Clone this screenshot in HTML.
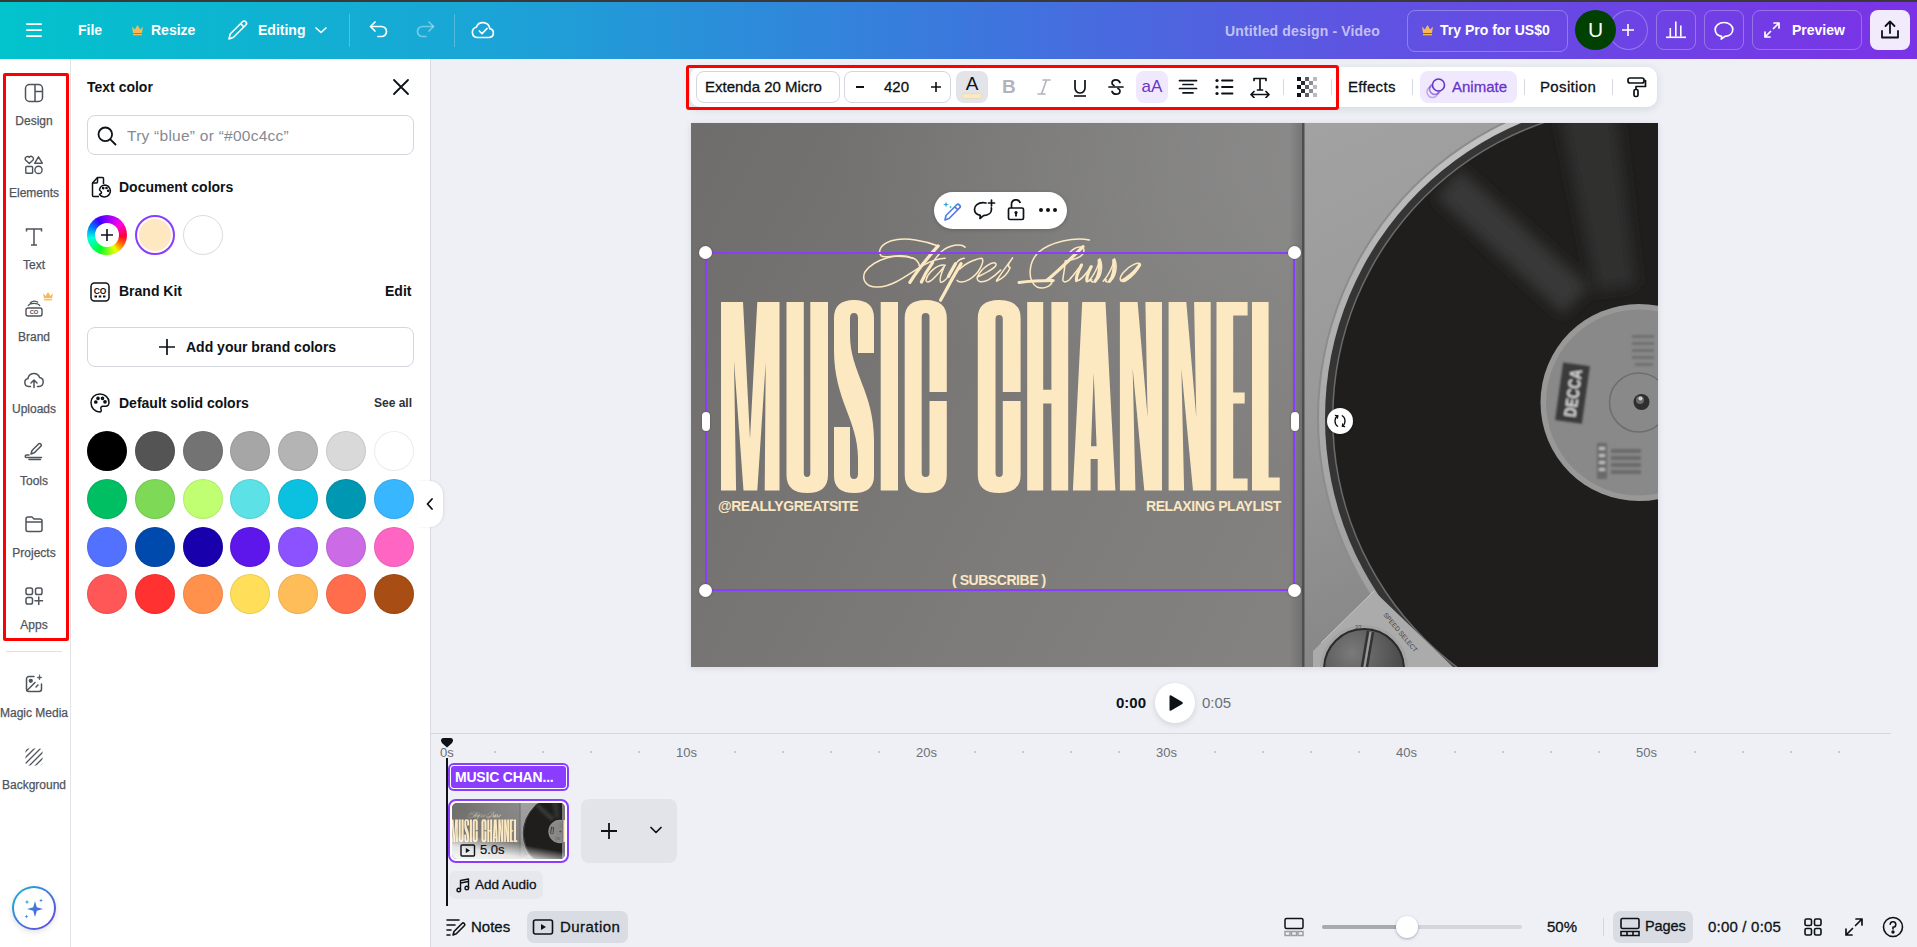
<!DOCTYPE html>
<html><head><meta charset="utf-8">
<style>
*{box-sizing:border-box;margin:0;padding:0}
html,body{width:1917px;height:947px;overflow:hidden;background:#eef0f5;font-family:"Liberation Sans",sans-serif;color:#0d1216}
.abs{position:absolute}
#topstrip{left:0;top:0;width:1917px;height:2px;background:#3b3838}
#header{left:0;top:2px;width:1917px;height:57px;background:linear-gradient(90deg,#02c3cc 0%,#1aa5d6 25%,#3b78dd 50%,#5d55e2 70%,#7b32e6 100%)}
#rail{left:0;top:59px;width:71px;height:888px;background:#fff;border-right:1px solid #e3e4ea}
#panel{left:71px;top:59px;width:360px;height:888px;background:#fff;border-right:1px solid #d9dbe3}
.lbl{position:absolute;left:0;width:68px;text-align:center;font-size:12px;color:#4f545c;white-space:nowrap;-webkit-text-stroke:.25px #4f545c}
.ph{position:absolute;font-size:14px;font-weight:bold;color:#0d1216;white-space:nowrap}
.sw{position:absolute;width:40px;height:40px;border-radius:50%;box-shadow:inset 0 0 0 1px rgba(0,0,0,.08)}
.tb{position:absolute;font-size:15px;color:#0d1216;white-space:nowrap;-webkit-text-stroke:.3px currentColor}
.hd{position:absolute;width:13px;height:13px;border-radius:50%;background:#fff;box-shadow:0 0 2px rgba(0,0,0,.4)}
.ct{position:absolute;font-size:14px;font-weight:bold;color:#fbe7c2;white-space:nowrap;letter-spacing:-.45px}
.rl{position:absolute;top:745px;font-size:13px;color:#6a6f77}
.hw{color:#fff;font-weight:bold;font-size:14px}
</style></head>
<body>
<div id="topstrip" class="abs"></div>

<div id="header" class="abs">
 <!-- hamburger -->
 <svg class="abs" style="left:25px;top:21px" width="18" height="16" viewBox="0 0 18 16"><g fill="#fff"><rect x="1" y="0.2" width="16" height="1.8" rx=".9"/><rect x="1" y="6.2" width="16" height="1.8" rx=".9"/><rect x="1" y="12.2" width="16" height="1.8" rx=".9"/></g></svg>
 <div class="abs hw" style="left:78px;top:20px">File</div>
 <svg class="abs" style="left:131px;top:21.5px" width="13" height="12" viewBox="0 0 13 12"><path d="M1 2.5 L3.8 5.5 L6.5 1 L9.2 5.5 L12 2.5 L11 9 H2 Z" fill="#f7b955"/><rect x="2" y="10" width="9" height="1.3" fill="#f7b955"/></svg>
 <div class="abs hw" style="left:151px;top:20px">Resize</div>
 <svg class="abs" style="left:227px;top:17px" width="22" height="22" viewBox="0 0 22 22" fill="none" stroke="#fff" stroke-width="1.6" stroke-linejoin="round"><path d="M2 20 L3.2 15 L15.5 2.7 a2.3 2.3 0 0 1 3.3 3.3 L6.5 18.3 Z"/><path d="M13.6 4.6 L17 8"/></svg>
 <div class="abs hw" style="left:258px;top:20px">Editing</div>
 <svg class="abs" style="left:314px;top:23px" width="14" height="10" viewBox="0 0 14 10" fill="none" stroke="#fff" stroke-width="1.6"><path d="M1.5 2.5 L7 7.5 L12.5 2.5"/></svg>
 <div class="abs" style="left:349px;top:12px;width:1px;height:33px;background:rgba(255,255,255,.25)"></div>
 <svg class="abs" style="left:367px;top:17px" width="24" height="20" viewBox="0 0 24 20" fill="none" stroke="#fff" stroke-width="1.7" stroke-linecap="round" stroke-linejoin="round"><path d="M8 3 L3.5 7.5 L8 12"/><path d="M4 7.5 H14.5 a5 5 0 0 1 0 10 H11"/></svg>
 <svg class="abs" style="left:413px;top:17px" width="24" height="20" viewBox="0 0 24 20" fill="none" stroke="rgba(255,255,255,.4)" stroke-width="1.7" stroke-linecap="round" stroke-linejoin="round"><path d="M16 3 L20.5 7.5 L16 12"/><path d="M20 7.5 H9.5 a5 5 0 0 0 0 10 H13"/></svg>
 <div class="abs" style="left:454px;top:12px;width:1px;height:33px;background:rgba(255,255,255,.25)"></div>
 <svg class="abs" style="left:470px;top:16.5px" width="26" height="22" viewBox="0 0 26 22" fill="none" stroke="#fff" stroke-width="1.7" stroke-linecap="round" stroke-linejoin="round"><path d="M7 18.5 H19 a4.5 4.5 0 0 0 .8 -8.9 A7 7 0 0 0 6.3 8.3 A5.2 5.2 0 0 0 7 18.5 Z"/><path d="M9.3 12 L12 14.7 L17 9.5"/></svg>

 <div class="abs" style="left:1225px;top:21px;font-size:14px;font-weight:bold;letter-spacing:.15px;color:rgba(255,255,255,.64)">Untitled design - Video</div>
 <div class="abs" style="left:1407px;top:8px;width:161px;height:42px;border:1px solid rgba(255,255,255,.28);border-radius:8px"></div>
 <svg class="abs" style="left:1421px;top:21.5px" width="13" height="12" viewBox="0 0 13 12"><path d="M1 2.5 L3.8 5.5 L6.5 1 L9.2 5.5 L12 2.5 L11 9 H2 Z" fill="#f7b955"/><rect x="2" y="10" width="9" height="1.3" fill="#f7b955"/></svg>
 <div class="abs hw" style="left:1440px;top:20px">Try Pro for US$0</div>
 <div class="abs" style="left:1609px;top:8px;width:39px;height:40px;border:1px solid rgba(255,255,255,.28);border-radius:50%"></div>
 <div class="abs" style="left:1575px;top:8px;width:41px;height:40px;border-radius:50%;background:#004000;color:#fff;font-size:21px;text-align:center;line-height:39px">U</div>
 <svg class="abs" style="left:1621px;top:21px" width="14" height="14" viewBox="0 0 14 14" stroke="#fff" stroke-width="1.6"><path d="M7 1 V13 M1 7 H13"/></svg>
 <div class="abs" style="left:1656px;top:8px;width:40px;height:40px;border:1px solid rgba(255,255,255,.28);border-radius:8px"></div>
 <svg class="abs" style="left:1665px;top:17.5px" width="22" height="20" viewBox="0 0 22 20" fill="#fff"><rect x="1" y="16.5" width="20" height="1.6"/><rect x="4.5" y="8" width="1.6" height="9"/><rect x="10" y="1.5" width="1.6" height="15"/><rect x="15" y="5.5" width="1.6" height="11"/></svg>
 <div class="abs" style="left:1704px;top:8px;width:40px;height:40px;border:1px solid rgba(255,255,255,.28);border-radius:8px"></div>
 <svg class="abs" style="left:1713px;top:17.5px" width="22" height="22" viewBox="0 0 22 22" fill="none" stroke="#fff" stroke-width="1.7" stroke-linejoin="round"><path d="M11 2.5 C5.8 2.5 2.2 5.6 2.2 9.5 C2.2 12.9 4.9 15.6 8.6 16.3 L8.3 19 L12 16.4 C16.9 16.1 19.8 13.2 19.8 9.5 C19.8 5.6 16.2 2.5 11 2.5 Z"/></svg>
 <div class="abs" style="left:1752px;top:8px;width:110px;height:40px;border:1px solid rgba(255,255,255,.28);border-radius:8px"></div>
 <svg class="abs" style="left:1762px;top:18px" width="20" height="20" viewBox="0 0 20 20" fill="none" stroke="#fff" stroke-width="1.7" stroke-linecap="round" stroke-linejoin="round"><path d="M12 3 H17 V8 M17 3 L11.5 8.5 M8 17 H3 V12 M3 17 L8.5 11.5"/></svg>
 <div class="abs hw" style="left:1792px;top:20px">Preview</div>
 <div class="abs" style="left:1870px;top:8px;width:40px;height:40px;border-radius:8px;background:#f1ebfc"></div>
 <svg class="abs" style="left:1879px;top:17px" width="22" height="22" viewBox="0 0 22 22" fill="none" stroke="#0d1216" stroke-width="1.8" stroke-linecap="round" stroke-linejoin="round"><path d="M11 14 V3 M6.5 7 L11 2.5 L15.5 7 M3 12 V18.5 H19 V12"/></svg>
</div>


<div id="rail" class="abs">
</div>
<div class="abs" style="left:3px;top:73px;width:66px;height:568px;border:3px solid #ff0000;border-radius:2px"></div>
<div class="abs" style="left:0;top:59px;width:71px">
 <svg class="abs" style="left:24px;top:24px" width="20" height="20" viewBox="0 0 20 20" fill="none" stroke="#4f545c" stroke-width="1.5"><rect x="1.5" y="1.5" width="17" height="17" rx="4"/><path d="M11 1.5 V18.5 M11 8.5 H18.5"/></svg>
 <div class="lbl" style="top:55px">Design</div>
 <svg class="abs" style="left:24px;top:96px" width="20" height="20" viewBox="0 0 20 20" fill="none" stroke="#4f545c" stroke-width="1.4" stroke-linejoin="round"><path d="M5.3 8.6 L1.8 5.2 A2 2 0 0 1 5.3 2.3 A2 2 0 0 1 8.8 5.2 Z"/><path d="M14.5 1.8 L18.3 8.2 H10.7 Z"/><rect x="1.8" y="11.5" width="6.8" height="6.8" rx=".8"/><circle cx="14.5" cy="14.9" r="3.6"/></svg>
 <div class="lbl" style="top:127px">Elements</div>
 <svg class="abs" style="left:24px;top:168px" width="20" height="20" viewBox="0 0 20 20" fill="none" stroke="#4f545c" stroke-width="1.5"><path d="M2.5 4.5 V2 H17.5 V4.5 M10 2 V18 M7 18 H13"/></svg>
 <div class="lbl" style="top:199px">Text</div>
 <svg class="abs" style="left:24px;top:239px" width="20" height="20" viewBox="0 0 20 20" fill="none" stroke="#4f545c" stroke-width="1.4"><rect x="2" y="10" width="16" height="8" rx="2"/><path d="M4 8 C6 4.5 14 4.5 16 8 M6 5.5 C8 2.5 12 2.5 14 4.5"/><text x="10" y="16.3" font-size="5.8" font-family="Liberation Sans" font-weight="bold" text-anchor="middle" fill="#4f545c" stroke="none">CO</text></svg>
 <svg class="abs" style="left:42px;top:232px" width="12" height="10" viewBox="0 0 13 11"><path d="M1 2.5 L3.8 5.5 L6.5 1 L9.2 5.5 L12 2.5 L11 8 H2 Z" fill="#f7b955"/><rect x="2" y="9" width="9" height="1.4" fill="#f7b955"/></svg>
 <div class="lbl" style="top:271px">Brand</div>
 <svg class="abs" style="left:23px;top:311px" width="22" height="20" viewBox="0 0 22 20" fill="none" stroke="#4f545c" stroke-width="1.5" stroke-linecap="round" stroke-linejoin="round"><path d="M7.5 16.5 H5.5 A4 4 0 0 1 5 8.6 A6 6 0 0 1 16.6 7.6 A4.5 4.5 0 0 1 16 16.5 H14.5"/><path d="M11 17.5 V10.5 M8 13 L11 10 L14 13"/></svg>
 <div class="lbl" style="top:343px">Uploads</div>
 <svg class="abs" style="left:24px;top:382px" width="20" height="20" viewBox="0 0 20 20" fill="none" stroke="#4f545c" stroke-width="1.5" stroke-linecap="round" stroke-linejoin="round"><path d="M7 13 L8 9.5 L14.5 3 A1.6 1.6 0 0 1 16.8 5.3 L10.3 11.8 Z"/><path d="M5 14 H2.5 A1.3 1.3 0 0 0 2.5 16.6 H17.5 M5 18.5 H16.5"/></svg>
 <div class="lbl" style="top:415px">Tools</div>
 <svg class="abs" style="left:24px;top:455px" width="20" height="20" viewBox="0 0 20 20" fill="none" stroke="#4f545c" stroke-width="1.5" stroke-linejoin="round"><path d="M2 5 A2 2 0 0 1 4 3 H8 L10 5 H16 A2 2 0 0 1 18 7 V15.5 A2 2 0 0 1 16 17.5 H4 A2 2 0 0 1 2 15.5 Z M2 8 H18"/></svg>
 <div class="lbl" style="top:487px">Projects</div>
 <svg class="abs" style="left:24px;top:527px" width="20" height="20" viewBox="0 0 20 20" fill="none" stroke="#4f545c" stroke-width="1.5" stroke-linecap="round"><rect x="2" y="2" width="6.5" height="6.5" rx="1.8"/><rect x="11.5" y="2" width="6.5" height="6.5" rx="1.8"/><rect x="2" y="11.5" width="6.5" height="6.5" rx="1.8"/><path d="M14.75 11 V18.5 M11 14.75 H18.5"/></svg>
 <div class="lbl" style="top:559px">Apps</div>
 <div class="abs" style="left:6px;top:592px;width:56px;height:1px;background:#dfe1e6"></div>
 <svg class="abs" style="left:24px;top:615px" width="20" height="20" viewBox="0 0 20 20" fill="none" stroke="#4f545c" stroke-width="1.5" stroke-linecap="round" stroke-linejoin="round"><path d="M10 2.5 H5 A2.5 2.5 0 0 0 2.5 5 V15 A2.5 2.5 0 0 0 5 17.5 H15 A2.5 2.5 0 0 0 17.5 15 V10"/><path d="M3 16.5 L11 8.5 M12 13 L14 11"/><circle cx="6.8" cy="6.8" r="1.4" fill="#4f545c"/><path d="M15.5 1 L16 3 L18 3.5 L16 4 L15.5 6 L15 4 L13 3.5 L15 3 Z" fill="#4f545c" stroke-width=".6"/></svg>
 <div class="lbl" style="top:647px">Magic Media</div>
 <svg class="abs" style="left:24px;top:688px" width="20" height="20" viewBox="0 0 20 20"><defs><clipPath id="bgc"><rect x="1.5" y="1.5" width="17" height="17" rx="3"/></clipPath></defs><g clip-path="url(#bgc)" stroke="#4f545c" stroke-width="1.3"><path d="M-10 10 L10 -10 M-7 13 L13 -7 M-4 16 L16 -4 M-1 19 L19 -1 M2 22 L22 2 M5 25 L25 5 M8 28 L28 8 M11 31 L31 11"/></g></svg>
 <div class="lbl" style="top:719px">Background</div>
 <div class="abs" style="left:12px;top:827px;width:44px;height:44px;border-radius:50%;background:linear-gradient(135deg,#17b4d6,#6a3fe0);box-shadow:0 2px 6px rgba(0,0,0,.12)"></div>
 <div class="abs" style="left:14px;top:829px;width:40px;height:40px;border-radius:50%;background:#fff"></div>
 <svg class="abs" style="left:22px;top:838px" width="24" height="24" viewBox="0 0 24 24"><defs><linearGradient id="mg" x1="0" y1="0" x2="1" y2="1"><stop offset="0" stop-color="#1aa5d6"/><stop offset="1" stop-color="#6b45e6"/></linearGradient></defs><path d="M13 4 L14.8 10.2 L21 12 L14.8 13.8 L13 20 L11.2 13.8 L5 12 L11.2 10.2 Z" fill="url(#mg)"/><path d="M5 2.5 L5.6 4.4 L7.5 5 L5.6 5.6 L5 7.5 L4.4 5.6 L2.5 5 L4.4 4.4 Z" fill="#1aa5d6"/><path d="M19 1.5 L19.5 3 L21 3.5 L19.5 4 L19 5.5 L18.5 4 L17 3.5 L18.5 3 Z" fill="#3d7ae0"/><path d="M4.5 17.5 L5 19 L6.5 19.5 L5 20 L4.5 21.5 L4 20 L2.5 19.5 L4 19 Z" fill="#3d7ae0"/></svg>
</div>


<div id="panel" class="abs"></div>
<div class="abs" style="left:71px;top:59px;width:360px;height:888px">
 <div class="ph" style="left:16px;top:20px">Text color</div>
 <svg class="abs" style="left:321px;top:19px" width="18" height="18" viewBox="0 0 18 18" stroke="#0d1216" stroke-width="1.8" stroke-linecap="round"><path d="M2 2 L16 16 M16 2 L2 16"/></svg>
 <div class="abs" style="left:16px;top:56px;width:327px;height:40px;border:1px solid #d3d6dd;border-radius:8px"></div>
 <svg class="abs" style="left:25px;top:65.5px" width="22" height="22" viewBox="0 0 22 22" fill="none" stroke="#0d1216" stroke-width="1.8" stroke-linecap="round"><circle cx="9.3" cy="9.3" r="6.8"/><path d="M14.3 14.3 L19.5 19.5"/></svg>
 <div class="abs" style="left:56px;top:67.5px;font-size:15.5px;letter-spacing:.25px;color:#858a93">Try “blue” or “#00c4cc”</div>

 <svg class="abs" style="left:19px;top:117px" width="22" height="22" viewBox="0 0 22 22" fill="none" stroke="#0d1216" stroke-width="1.5" stroke-linejoin="round"><path d="M9 20.5 H3.5 A1 1 0 0 1 2.5 19.5 V7 L7.5 1.5 H12.5 A1 1 0 0 1 13.5 2.5 V8"/><path d="M7.5 1.5 V6 A1 1 0 0 1 6.5 7 H2.5"/><path d="M15 9 A6 6 0 1 1 9.5 18.5 C10 17.5 11.5 18 11.5 16.5 C11.5 15 9.5 15 9.5 13.5 A6 6 0 0 1 15 9 Z"/><circle cx="13.2" cy="12.2" r=".6" fill="#0d1216"/><circle cx="16.5" cy="12" r=".6" fill="#0d1216"/><circle cx="18.2" cy="14.8" r=".6" fill="#0d1216"/></svg>
 <div class="ph" style="left:48px;top:120px">Document colors</div>
 <div class="abs" style="left:16px;top:156px;width:40px;height:40px;border-radius:50%;background:conic-gradient(from 0deg,#8a00ff,#ff00e6 50deg,#ff0030 95deg,#ff7a00 125deg,#f0ff00 150deg,#00ff2a 205deg,#00ffe0 260deg,#0070ff 300deg,#3a00ff 330deg,#8a00ff 360deg)"></div>
 <div class="abs" style="left:24px;top:164px;width:24px;height:24px;border-radius:50%;background:#fff"></div>
 <svg class="abs" style="left:29px;top:169px" width="14" height="14" viewBox="0 0 14 14" stroke="#0d1216" stroke-width="1.6"><path d="M7 1 V13 M1 7 H13"/></svg>
 <div class="abs" style="left:64px;top:156px;width:40px;height:40px;border-radius:50%;border:2.5px solid #8b3dff;background:#fde8c1;box-shadow:inset 0 0 0 2px #fff"></div>
 <div class="abs" style="left:112px;top:156px;width:40px;height:40px;border-radius:50%;border:1px solid #d8dbe1;background:#fff"></div>

 <svg class="abs" style="left:18px;top:222px" width="22" height="22" viewBox="0 0 22 22" fill="none" stroke="#0d1216" stroke-width="1.5"><rect x="2" y="2" width="18" height="18" rx="3.5"/><text x="11" y="12.5" font-size="8.5" font-family="Liberation Sans" font-weight="bold" text-anchor="middle" fill="#0d1216" stroke="none">CO</text><g fill="#0d1216" stroke="none"><rect x="5.5" y="14.5" width="2.5" height="2"/><rect x="9.75" y="14.5" width="2.5" height="2"/><rect x="14" y="14.5" width="2.5" height="2"/></g></svg>
 <div class="ph" style="left:48px;top:224px">Brand Kit</div>
 <div class="ph" style="left:314px;top:224px">Edit</div>
 <div class="abs" style="left:16px;top:268px;width:327px;height:40px;border:1px solid #d3d6dd;border-radius:8px"></div>
 <svg class="abs" style="left:87px;top:279px" width="18" height="18" viewBox="0 0 18 18" stroke="#0d1216" stroke-width="1.7"><path d="M9 1 V17 M1 9 H17"/></svg>
 <div class="ph" style="left:115px;top:280px">Add your brand colors</div>

 <svg class="abs" style="left:18px;top:333px" width="22" height="22" viewBox="0 0 22 22" fill="none" stroke="#0d1216" stroke-width="1.5" stroke-linejoin="round"><path d="M11 2 C5.5 2 2 6 2 10.8 C2 15.8 6 20 10.5 20 C12.5 20 12.5 18.3 12 17.2 C11.3 15.8 12.3 14.2 14 14.3 H16.5 C18.7 14.3 20 12.8 20 10.3 C20 5.5 15.8 2 11 2 Z"/><circle cx="6.8" cy="10" r="1.1" fill="#0d1216"/><circle cx="9" cy="6.3" r="1.1" fill="#0d1216"/><circle cx="13.5" cy="6.3" r="1.1" fill="#0d1216"/><circle cx="16" cy="9.8" r="1.1" fill="#0d1216"/></svg>
 <div class="ph" style="left:48px;top:336px">Default solid colors</div>
 <div class="abs" style="left:303px;top:337px;font-size:12px;font-weight:bold;color:#2e3238">See all</div>
</div>
<div class="abs" style="left:0;top:0">
<div class="sw" style="left:87px;top:431px;background:#000000"></div>
<div class="sw" style="left:135px;top:431px;background:#545454"></div>
<div class="sw" style="left:183px;top:431px;background:#737373"></div>
<div class="sw" style="left:230px;top:431px;background:#a6a6a6"></div>
<div class="sw" style="left:278px;top:431px;background:#b4b4b4"></div>
<div class="sw" style="left:326px;top:431px;background:#d9d9d9"></div>
<div class="sw" style="left:374px;top:431px;background:#ffffff"></div>
<div class="sw" style="left:87px;top:479px;background:#00bf63"></div>
<div class="sw" style="left:135px;top:479px;background:#7ed957"></div>
<div class="sw" style="left:183px;top:479px;background:#c1ff72"></div>
<div class="sw" style="left:230px;top:479px;background:#5ce1e6"></div>
<div class="sw" style="left:278px;top:479px;background:#0cc0df"></div>
<div class="sw" style="left:326px;top:479px;background:#0097b2"></div>
<div class="sw" style="left:374px;top:479px;background:#38b6ff"></div>
<div class="sw" style="left:87px;top:527px;background:#5271ff"></div>
<div class="sw" style="left:135px;top:527px;background:#004aad"></div>
<div class="sw" style="left:183px;top:527px;background:#1800ad"></div>
<div class="sw" style="left:230px;top:527px;background:#5e17eb"></div>
<div class="sw" style="left:278px;top:527px;background:#8c52ff"></div>
<div class="sw" style="left:326px;top:527px;background:#cb6ce6"></div>
<div class="sw" style="left:374px;top:527px;background:#ff66c4"></div>
<div class="sw" style="left:87px;top:574px;background:#ff5757"></div>
<div class="sw" style="left:135px;top:574px;background:#ff3131"></div>
<div class="sw" style="left:183px;top:574px;background:#ff914d"></div>
<div class="sw" style="left:230px;top:574px;background:#ffde59"></div>
<div class="sw" style="left:278px;top:574px;background:#ffbd59"></div>
<div class="sw" style="left:326px;top:574px;background:#ff6d4d"></div>
<div class="sw" style="left:374px;top:574px;background:#a84d13"></div>

</div>
<div class="abs" style="left:417px;top:481px;width:26px;height:46px;border-radius:0 14px 14px 0;background:#fff;box-shadow:1px 0 3px rgba(0,0,0,.08)"></div>
<svg class="abs" style="left:425px;top:497px" width="10" height="14" viewBox="0 0 10 14" fill="none" stroke="#0d1216" stroke-width="1.8" stroke-linecap="round" stroke-linejoin="round"><path d="M7 2 L2.5 7 L7 12"/></svg>

<div class="abs" style="left:691px;top:123px;width:967px;height:544px;box-shadow:0 1px 6px rgba(40,50,70,.12)"></div>
<!--CANVAS_START-->
<svg class="abs" style="left:691px;top:123px" width="967" height="544" viewBox="0 0 967 544">
<defs>
 <linearGradient id="wall" x1="0" y1="0" x2="1" y2="0.3">
  <stop offset="0" stop-color="#6e6d6c"/><stop offset="0.5" stop-color="#7c7b7a"/><stop offset="1" stop-color="#878685"/>
 </linearGradient>
 <radialGradient id="wallhl" cx="0.75" cy="0.05" r="0.6">
  <stop offset="0" stop-color="#9a9a9a" stop-opacity=".55"/><stop offset="1" stop-color="#9a9a9a" stop-opacity="0"/>
 </radialGradient>
 <linearGradient id="body" x1="0" y1="0" x2="0.3" y2="1">
  <stop offset="0" stop-color="#a2a2a2"/><stop offset="0.5" stop-color="#999999"/><stop offset="1" stop-color="#848484"/>
 </linearGradient>
 <radialGradient id="knob" cx="0.35" cy="0.3" r="0.8">
  <stop offset="0" stop-color="#7a7a7a"/><stop offset="1" stop-color="#3e3e3e"/>
 </radialGradient>
 <linearGradient id="edge" x1="0" y1="0" x2="1" y2="0"><stop offset="0" stop-color="#555" stop-opacity="0"/><stop offset="1" stop-color="#555" stop-opacity=".45"/></linearGradient>
 <filter id="blur8" x="-50%" y="-50%" width="200%" height="200%"><feGaussianBlur stdDeviation="7"/></filter>
 <filter id="blur1"><feGaussianBlur stdDeviation="0.8"/></filter>
 <clipPath id="cv"><rect width="967" height="544"/></clipPath>
 <clipPath id="rec"><circle cx="954" cy="295" r="311"/></clipPath>
 <radialGradient id="rimg" cx="0.45" cy="0.0" r="1"><stop offset="0" stop-color="#cdcdcd"/><stop offset=".5" stop-color="#b2b2b2"/><stop offset="1" stop-color="#9a9a9a"/></radialGradient>
 <linearGradient id="lab" x1="0" y1="0" x2="1" y2="1"><stop offset="0" stop-color="#939393"/><stop offset="1" stop-color="#a2a2a2"/></linearGradient>
</defs>
<g id="cvs" clip-path="url(#cv)">
 <rect width="967" height="544" fill="url(#wall)"/>
 <rect width="967" height="544" fill="url(#wallhl)"/>
 <rect x="598" y="0" width="15" height="544" fill="url(#edge)"/>
 <rect x="612" y="0" width="355" height="544" fill="url(#body)"/>
 <rect x="611" y="0" width="2.5" height="544" fill="#4e4e4e"/>
 <!-- rim -->
 <circle cx="954" cy="295" r="328" fill="#8c8c8c"/>
 <circle cx="954" cy="295" r="326" fill="url(#rimg)"/>
 <circle cx="954" cy="295" r="320" fill="#353535"/>
 <circle cx="954" cy="295" r="313" fill="#6b6b6b"/>
 <circle cx="954" cy="295" r="311.5" fill="#1f1e1d"/>
 <g clip-path="url(#rec)" filter="url(#blur8)">
  <path d="M769 46 L898 164 L872 191 L745 74 Z" fill="#3c3c3c" opacity=".85"/>
  <path d="M868 -10 L925 -10 L945 162 L905 168 Z" fill="#363636" opacity=".8"/>
 </g>
 <!-- label -->
 <circle cx="948" cy="279.5" r="98.5" fill="#989898"/>
 <circle cx="948" cy="279.5" r="93" fill="#898989"/>
 <circle cx="948" cy="279.5" r="29.5" fill="none" stroke="#6e6e6e" stroke-width="1.5"/>
 <g filter="url(#blur1)">
 <g transform="rotate(8 881 270)"><rect x="868" y="241" width="27" height="58" fill="#3a3a3a"/><text x="0" y="0" transform="translate(888 294) rotate(-90)" font-size="17" font-family="Liberation Sans" font-weight="bold" fill="#dcdcdc" textLength="48" lengthAdjust="spacingAndGlyphs">DECCA</text></g>
 <g fill="#707070"><rect x="941" y="212" width="22" height="3"/><rect x="941" y="219" width="22" height="3"/><rect x="941" y="226" width="22" height="3"/><rect x="941" y="233" width="22" height="3"/><rect x="944" y="240" width="18" height="3"/></g>
 <g fill="#6a6a6a"><rect x="906" y="320" width="10" height="36"/><rect x="920" y="326" width="30" height="4"/><rect x="920" y="333" width="30" height="4"/><rect x="920" y="340" width="30" height="4"/><rect x="920" y="347" width="30" height="4"/></g>
 <g fill="#bdbdbd"><rect x="908" y="324" width="6" height="3"/><rect x="908" y="331" width="6" height="3"/><rect x="908" y="338" width="6" height="3"/><rect x="908" y="345" width="6" height="3"/></g>
 </g>
 <circle cx="950.5" cy="279" r="8" fill="#2e2e2e"/>
 <circle cx="949" cy="277" r="4" fill="#6a6a6a"/>
 <circle cx="949.5" cy="275.5" r="2" fill="#cfcfcf"/>
 <!-- speed select plate & knob -->
 <path d="M622 528 L683 468 L762 544 L622 544 Z" fill="#ababab"/>
 <path d="M683 468 L630 520" stroke="#c8c8c8" stroke-width="1"/>
 <circle cx="673" cy="546" r="44" fill="#a3a3a3"/>
 <circle cx="673" cy="546" r="40" fill="url(#knob)" stroke="#2a2a2a" stroke-width="2"/>
 <path d="M677 508 L671 544 M682 509 L676 544" stroke="#333" stroke-width="2.5"/>
 <path d="M679.5 509 L673.5 544" stroke="#9a9a9a" stroke-width="2"/>
 <text x="0" y="0" font-size="6.5" font-family="Liberation Sans" fill="#3a3a3a" transform="translate(692 492) rotate(50)">SPEED SELECT</text>
 <text x="664" y="506" font-size="6" font-family="Liberation Sans" fill="#555">33</text>
 <!-- text -->
 <g fill="#fde9c1" fill-rule="evenodd">
<path d="M30.0,179.0 L52.0,179.0 L59.0,316.0 L66.3,179.0 L88.5,179.0 L88.5,367.6 L73.7,367.6 L74.7,239.7 L66.3,367.6 L52.5,367.6 L43.0,237.5 L45.1,367.6 L30.0,367.6Z"/>
<path d="M95.5,179.0 L112.8,179.0 L112.8,350.0 Q112.8,354.0 116.0,354.0 Q119.3,354.0 119.3,350.0 L119.3,179.0 L137.0,179.0 L137.0,352.0 Q137.0,370.0 116.2,370.0 Q95.5,370.0 95.5,352.0 Z"/>
<path d="M143.0,195.0 Q143.0,177.0 163.0,177.0 Q183.0,177.0 183.0,195.0 L183.0,230.0 L167.0,230.0 L167.0,195.0 Q167.0,190.0 163.0,190.0 Q159.0,190.0 159.0,195.0 L159.0,212.0 C159.0,249.0 183.0,269.0 183.0,317.0 L183.0,353.0 Q183.0,370.0 163.0,370.0 Q143.0,370.0 143.0,353.0 L143.0,304.0 L159.0,304.0 L159.0,351.0 Q159.0,356.0 163.0,356.0 Q167.0,356.0 167.0,351.0 L167.0,335.0 C167.0,297.0 143.0,277.0 143.0,227.0 Z"/>
<path d="M189.7,179.0 L207.0,179.0 L207.0,367.6 L189.7,367.6 Z"/>
<path d="M213.7,195.0 Q213.7,177.0 234.8,177.0 Q255.8,177.0 255.8,195.0 L255.8,269.0 L238.5,269.0 L238.5,194.0 Q238.5,190.0 234.6,190.0 Q230.7,190.0 230.7,194.0 L230.7,350.0 Q230.7,354.0 234.6,354.0 Q238.5,354.0 238.5,350.0 L238.5,278.0 L255.8,278.0 L255.8,352.0 Q255.8,370.0 234.8,370.0 Q213.7,370.0 213.7,352.0 Z"/>
<path d="M286.8,195.0 Q286.8,177.0 308.2,177.0 Q329.6,177.0 329.6,195.0 L329.6,269.0 L311.8,269.0 L311.8,196.0 Q311.8,192.0 308.1,192.0 Q304.5,192.0 304.5,196.0 L304.5,350.0 Q304.5,354.0 308.1,354.0 Q311.8,354.0 311.8,350.0 L311.8,278.0 L329.6,278.0 L329.6,352.0 Q329.6,370.0 308.2,370.0 Q286.8,370.0 286.8,352.0 Z"/>
<path d="M336.2,179.0 L352.2,179.0 L352.2,266.8 L360.4,266.8 L360.4,179.0 L377.2,179.0 L377.2,367.6 L360.4,367.6 L360.4,280.5 L352.2,280.5 L352.2,367.6 L336.2,367.6Z"/>
<path d="M391.2,179.0 L414.5,179.0 L424.4,367.6 L406.7,367.6 L406.7,336.0 L399.6,336.0 L399.6,367.6 L381.9,367.6Z M402.7,250.0 L405.6,323.3 L400.0,323.3Z"/>
<path d="M428.9,179.0 L446.6,179.0 L456.6,294.5 L454.4,179.0 L471.0,179.0 L471.0,367.6 L453.3,367.6 L441.7,245.7 L444.4,367.6 L428.9,367.6Z"/>
<path d="M477.6,179.0 L495.3,179.0 L505.3,294.5 L503.1,179.0 L519.7,179.0 L519.7,367.6 L502.0,367.6 L490.4,245.7 L493.1,367.6 L477.6,367.6Z"/>
<path d="M525.5,179.0 L556.6,179.0 L556.6,192.5 L542.2,192.5 L542.2,269.4 L553.7,269.4 L553.7,280.5 L542.2,280.5 L542.2,355.5 L556.6,355.5 L556.6,367.6 L525.5,367.6Z"/>
<path d="M561.0,179.0 L577.6,179.0 L577.6,354.4 L588.7,354.4 L588.7,367.6 L561.0,367.6Z"/>
 </g>
 <g fill="none" stroke="#fde9c1" stroke-linecap="round" stroke-linejoin="round"><path d="M 247.9,123.3 C 234.4,117.7 214.6,113.8 200.3,117.7 C 190.8,120.9 186.0,127.2 190.0,132.8 C 193.2,136.0 206.7,130.4 222.5,135.2 C 227.3,137.5 228.1,140.7 228.5,143.1 " stroke-width="1.5"/><path d="M 221.7,135.2 C 206.7,128.8 182.9,136.8 174.1,148.7 C 170.2,156.6 174.9,164.5 186.8,164.1 C 202.7,163.7 218.5,150.2 232.0,142.3 C 242.3,136.8 250.3,135.2 254.2,135.2 " stroke-width="1.5"/><path d="M 274.1,124.1 C 270.1,120.1 258.2,121.7 250.3,128.8 C 245.5,133.6 242.3,138.3 240.0,142.3 " stroke-width="1.5"/><path d="M 254.2,142.3 C 246.3,140.7 236.8,150.2 235.2,156.6 C 234.4,159.8 238.4,159.8 242.3,155.8 C 246.3,151.8 251.1,146.3 253.4,143.1 C 250.3,150.2 247.9,156.6 249.5,159.0 C 251.9,159.8 255.0,156.6 257.4,153.4 " stroke-width="1.5"/><path d="M 257.4,153.4 C 260.6,147.9 263.7,142.3 266.1,139.1 C 267.7,136.8 271.7,135.2 273.3,135.2 " stroke-width="1.5"/><path d="M 268.5,146.3 C 276.4,138.3 288.3,135.2 290.7,135.2 C 293.9,137.5 289.1,150.2 278.0,156.6 C 272.5,159.8 267.7,159.8 266.1,157.4 " stroke-width="1.5"/><path d="M 286.0,154.2 C 293.9,150.2 306.6,144.7 305.0,140.7 C 301.8,137.5 290.7,144.7 286.7,153.4 C 284.4,159.0 290.7,160.5 297.8,156.6 C 301.8,154.2 306.6,150.2 309.7,147.1 " stroke-width="1.5"/><path d="M 247.1,122.9 C 238.4,132.8 227.3,145.5 218.9,159.4 " stroke-width="3.2"/><path d="M 241.5,139.9 C 236.8,146.3 232.8,153.4 230.4,159.0 " stroke-width="3.2"/><path d="M 270.1,140.7 C 262.2,153.4 255.8,166.1 249.5,177.2 " stroke-width="3.2"/><path d="M 264.5,140.7 C 262.2,144.7 259.8,148.7 257.4,153.4 " stroke-width="3.2"/><path d="M 305.5,157.5 C 311.1,149.4 316.8,141.3 321.6,134.9 C 318.4,139.7 315.2,143.0 319.2,144.6 C 316.8,151.0 311.1,155.9 305.5,158.3 " stroke-width="1.5"/><path d="M 398.4,117.1 C 383.9,113.9 359.6,118.7 347.5,129.2 C 337.0,139.7 336.2,157.5 345.9,164.0 C 354.0,167.2 362.9,161.5 360.4,156.7 " stroke-width="1.5"/><path d="M 378.2,130.0 C 386.3,121.1 396.0,122.7 392.0,130.8 C 388.7,135.7 379.8,137.3 374.2,138.1 C 374.2,145.4 371.8,153.5 371.8,157.5 C 373.4,160.7 378.2,157.5 379.8,155.1 " stroke-width="1.5"/><path d="M 379.8,155.1 C 384.7,149.4 387.9,144.6 391.2,141.3 C 387.9,147.8 383.9,155.9 386.3,157.5 C 389.5,158.3 394.4,151.0 400.9,143.0 C 396.0,151.0 394.4,157.5 397.6,158.3 " stroke-width="1.5"/><path d="M 397.6,158.3 C 404.1,151.0 407.3,143.0 408.9,135.7 C 412.2,143.0 410.6,154.3 404.1,158.3 C 400.9,159.9 398.4,157.5 400.9,156.7 " stroke-width="1.5"/><path d="M 412.2,158.3 C 418.6,151.0 421.9,143.0 423.5,135.7 C 426.7,143.0 425.1,154.3 418.6,158.3 C 415.4,159.9 413.0,157.5 415.4,156.7 " stroke-width="1.5"/><path d="M 430.0,157.5 C 436.4,154.3 449.4,143.0 449.4,141.3 C 447.7,138.9 439.7,141.3 432.4,149.4 C 427.5,155.1 428.3,160.7 434.8,157.5 C 441.3,154.3 447.7,146.2 449.4,141.3 " stroke-width="1.5"/><path d="M 328.1,159.5 C 339.4,157.9 351.5,157.5 362.1,157.5 " stroke-width="3.2"/><path d="M 392.0,123.6 C 379.8,135.7 367.7,147.8 355.6,157.5 " stroke-width="3.2"/><path d="M 390.4,142.1 C 387.1,148.6 384.7,154.3 385.5,157.5 " stroke-width="3.2"/><path d="M 400.1,143.8 C 396.8,150.2 395.2,155.1 396.0,157.9 " stroke-width="3.2"/><path d="M 408.1,137.3 C 409.8,145.4 407.3,154.3 404.1,158.3 " stroke-width="3.2"/><path d="M 422.7,137.3 C 424.3,145.4 421.9,154.3 418.6,158.3 " stroke-width="3.2"/><path d="M 448.6,142.1 C 444.5,147.8 438.0,155.1 433.2,157.5 " stroke-width="3.2"/></g>
</g>
</svg>
<!--CANVAS_END-->

<!--OVER_START-->
<!-- toolbar -->
<div class="abs" style="left:690px;top:67px;width:967px;height:40px;background:#fff;border-radius:10px;box-shadow:0 2px 8px rgba(57,76,96,.15)"></div>
<div class="abs" style="left:696px;top:71px;width:144px;height:32px;border:1px solid #d3d6dd;border-radius:8px"></div>
<div class="tb" style="left:705px;top:78px">Extenda 20 Micro</div>
<div class="abs" style="left:844px;top:71px;width:107px;height:32px;border:1px solid #d3d6dd;border-radius:8px"></div>
<div class="abs" style="left:856px;top:86px;width:8px;height:1.5px;background:#0d1216"></div>
<div class="tb" style="left:884px;top:78px">420</div>
<svg class="abs" style="left:930px;top:81px" width="12" height="12" viewBox="0 0 12 12" stroke="#0d1216" stroke-width="1.6"><path d="M6 1 V11 M1 6 H11"/></svg>
<div class="abs" style="left:956px;top:71px;width:32px;height:32px;border-radius:8px;background:#e2e4e9"></div>
<div class="abs" style="left:962px;top:73px;font-size:19px;color:#0d1216;width:20px;text-align:center">A</div>
<div class="abs" style="left:962px;top:94px;width:20px;height:4px;border-radius:2px;background:#fde9c1;box-shadow:0 0 0 .5px #e8d3a8"></div>
<div class="abs" style="left:1002px;top:76px;font-size:19px;font-weight:bold;color:#b1b4ba">B</div>
<svg class="abs" style="left:1036px;top:78px" width="16" height="18" viewBox="0 0 16 18" stroke="#b1b4ba" stroke-width="1.6" stroke-linecap="round"><path d="M10.5 2 L5.5 16 M7 2 H14 M2 16 H9"/></svg>
<svg class="abs" style="left:1071px;top:78px" width="18" height="20" viewBox="0 0 18 20" fill="none" stroke="#0d1216" stroke-width="1.7"><path d="M4 2 V10 A5 5 0 0 0 14 10 V2"/><path d="M3 18 H15" stroke-width="1.6"/></svg>
<svg class="abs" style="left:1106px;top:77px" width="20" height="20" viewBox="0 0 20 20" fill="none" stroke="#0d1216" stroke-width="1.7" stroke-linecap="round"><path d="M14 5.5 C13 3.5 11.5 2.8 10 2.8 C7.5 2.8 6 4.3 6 6 C6 7.2 6.8 8 8 8.5"/><path d="M6 14.5 C7 16.5 8.5 17.2 10 17.2 C12.5 17.2 14 15.7 14 14 C14 12.8 13.3 12 12 11.5"/><path d="M3 10 H17"/></svg>
<div class="abs" style="left:1136px;top:71px;width:32px;height:32px;border-radius:8px;background:#f0e9fd"></div>
<div class="abs" style="left:1136px;top:77px;width:32px;text-align:center;font-size:17px;color:#6a33c9">aA</div>
<svg class="abs" style="left:1178px;top:77px" width="20" height="20" viewBox="0 0 20 20" stroke="#0d1216" stroke-width="1.7" stroke-linecap="round"><path d="M1.5 3.7 H18.5 M5 7.5 H15 M1.5 11.5 H18.5 M5 15.9 H15"/></svg>
<svg class="abs" style="left:1214px;top:77px" width="20" height="20" viewBox="0 0 20 20" stroke="#0d1216" stroke-width="1.8" stroke-linecap="round" fill="#0d1216"><circle cx="3" cy="3.5" r="1.6" stroke="none"/><circle cx="3" cy="10" r="1.6" stroke="none"/><circle cx="3" cy="16.5" r="1.6" stroke="none"/><path d="M8 3.5 H18.5 M8 10 H18.5 M8 16.5 H18.5"/></svg>
<svg class="abs" style="left:1249px;top:76px" width="22" height="22" viewBox="0 0 22 22" fill="none" stroke="#0d1216" stroke-width="1.7" stroke-linecap="round" stroke-linejoin="round"><path d="M5 4.5 V2.5 H17 V4.5 M11 2.5 V14 M8.5 14 H13.5"/><path d="M2 18.5 H20 M5 15.5 L2 18.5 L5 21.5 M17 15.5 L20 18.5 L17 21.5"/></svg>
<div class="abs" style="left:1283px;top:79px;width:1px;height:16px;background:#d5d8de"></div>
<svg class="abs" style="left:1297px;top:77px" width="21" height="20" viewBox="0 0 21 20" shape-rendering="crispEdges"><g fill="#0d1216"><rect x="0" y="0" width="4" height="4"/><rect x="8" y="0" width="4" height="4" fill="#5c5f64"/><rect x="16" y="0" width="4" height="4" fill="#b9bbbf"/><rect x="4" y="4" width="4" height="4" fill="#2a2d31"/><rect x="12" y="4" width="4" height="4" fill="#8a8d91"/><rect x="0" y="8" width="4" height="4"/><rect x="8" y="8" width="4" height="4" fill="#5c5f64"/><rect x="16" y="8" width="4" height="4" fill="#b9bbbf"/><rect x="4" y="12" width="4" height="4" fill="#2a2d31"/><rect x="12" y="12" width="4" height="4" fill="#8a8d91"/><rect x="0" y="16" width="4" height="4"/><rect x="8" y="16" width="4" height="4" fill="#5c5f64"/><rect x="16" y="16" width="4" height="4" fill="#b9bbbf"/></g></svg>
<div class="abs" style="left:1331px;top:79px;width:1px;height:16px;background:#d5d8de"></div>
<div class="tb" style="left:1348px;top:78px;letter-spacing:.3px">Effects</div>
<div class="abs" style="left:1412px;top:79px;width:1px;height:16px;background:#d5d8de"></div>
<div class="abs" style="left:1420px;top:71px;width:97px;height:32px;border-radius:8px;background:#f0e9fd"></div>
<svg class="abs" style="left:1425px;top:76px" width="24" height="24" viewBox="0 0 24 24" fill="none" stroke="#6a33c9" stroke-width="1.6"><circle cx="7.5" cy="16" r="5.5" opacity=".35"/><circle cx="10" cy="13" r="5.5" opacity=".6"/><circle cx="13.5" cy="9" r="6" fill="#f0e9fd"/></svg>
<div class="tb" style="left:1452px;top:78px;color:#6a33c9">Animate</div>
<div class="abs" style="left:1524px;top:79px;width:1px;height:16px;background:#d5d8de"></div>
<div class="tb" style="left:1540px;top:78px;letter-spacing:.35px">Position</div>
<div class="abs" style="left:1612px;top:79px;width:1px;height:16px;background:#d5d8de"></div>
<svg class="abs" style="left:1625px;top:76px" width="22" height="22" viewBox="0 0 22 22" fill="none" stroke="#0d1216" stroke-width="1.7" stroke-linejoin="round"><rect x="3" y="2" width="16" height="5" rx="2"/><path d="M19 4.5 H20.5 V10.5 H11 V13.5"/><rect x="9" y="13.5" width="4" height="7" rx="1.5"/></svg>
<div class="abs" style="left:686px;top:65px;width:653px;height:45px;border:3px solid #ff0000;border-radius:3px"></div>

<!-- selection -->
<div class="abs" style="left:705px;top:252px;width:590px;height:339px;border:2px solid #8b3dff"></div>
<div class="hd" style="left:699px;top:246px"></div>
<div class="hd" style="left:1288px;top:246px"></div>
<div class="hd" style="left:699px;top:584px"></div>
<div class="hd" style="left:1288px;top:584px"></div>
<div class="abs" style="left:702px;top:412px;width:8px;height:19px;border-radius:4px;background:#fff;box-shadow:0 0 2px rgba(0,0,0,.35)"></div>
<div class="abs" style="left:1291px;top:412px;width:8px;height:19px;border-radius:4px;background:#fff;box-shadow:0 0 2px rgba(0,0,0,.35)"></div>
<div class="abs" style="left:1327px;top:408px;width:26px;height:26px;border-radius:50%;background:#fff;box-shadow:0 1px 3px rgba(0,0,0,.25)"></div>
<svg class="abs" style="left:1332px;top:413px" width="16" height="16" viewBox="0 0 16 16" fill="none" stroke="#0d1216" stroke-width="1.3" stroke-linecap="round" stroke-linejoin="round"><path d="M5.8 2.8 C2.2 4.5 2 10.8 5.6 13.2"/><path d="M3.4 2.3 L5.8 2.8 L5.4 5.2"/><path d="M10.2 2.8 C13.8 4.8 14 10.8 10.4 13.2"/><path d="M12.6 13.7 L10.4 13.2 L10.7 10.8"/></svg>
<!-- small canvas texts -->
<div class="ct" style="left:718px;top:498px">@REALLYGREATSITE</div>
<div class="ct" style="left:1146px;top:498px">RELAXING PLAYLIST</div>
<div class="ct" style="left:952px;top:572px">( SUBSCRIBE )</div>
<!-- mini toolbar -->
<div class="abs" style="left:934px;top:192px;width:133px;height:37px;border-radius:19px;background:#fff;box-shadow:0 1px 4px rgba(0,0,0,.2)"></div>
<svg class="abs" style="left:940px;top:199px" width="24" height="24" viewBox="0 0 24 24" fill="none" stroke-linejoin="round"><defs><linearGradient id="mp" x1="0" y1="0" x2="1" y2="1"><stop offset="0" stop-color="#2aa7d8"/><stop offset="1" stop-color="#7a52e8"/></linearGradient></defs><path d="M5 21 L6 16.5 L16.5 6 A2 2 0 0 1 19.5 9 L9 19.5 Z M14.8 7.8 L17.7 10.7" stroke="url(#mp)" stroke-width="1.7"/><path d="M6 2.5 L6.7 4.8 L9 5.5 L6.7 6.2 L6 8.5 L5.3 6.2 L3 5.5 L5.3 4.8 Z" fill="#2aa7d8"/><path d="M10.5 6.5 L10.9 7.6 L12 8 L10.9 8.4 L10.5 9.5 L10.1 8.4 L9 8 L10.1 7.6 Z" fill="#2aa7d8"/></svg>
<svg class="abs" style="left:972px;top:198px" width="24" height="24" viewBox="0 0 24 24" fill="none" stroke="#0d1216" stroke-width="1.7" stroke-linejoin="round" stroke-linecap="round"><path d="M14 5 C13 4.8 12 4.7 11 4.7 C6 4.7 2.5 7.6 2.5 11.3 C2.5 14.3 4.8 16.7 8.3 17.4 L8 20.5 L11.5 17.7 C16.5 17.5 19.5 14.7 19.5 11.3 C19.5 10.8 19.4 10.3 19.3 9.8"/><path d="M19.5 2 V8 M16.5 5 H22.5"/></svg>
<svg class="abs" style="left:1006px;top:198px" width="20" height="24" viewBox="0 0 20 24" fill="none" stroke="#0d1216" stroke-width="1.7" stroke-linejoin="round"><path d="M5.5 10 V6.5 A4.5 4.5 0 0 1 14.3 5"/><rect x="2.5" y="10" width="15" height="11.5" rx="1.5"/><circle cx="10" cy="14.5" r="1.6" fill="#0d1216" stroke="none"/><path d="M10 15 V18.5" stroke-width="1.8"/></svg>
<svg class="abs" style="left:1038px;top:204px" width="20" height="12" viewBox="0 0 20 12" fill="#0d1216"><circle cx="3" cy="6" r="2"/><circle cx="10" cy="6" r="2"/><circle cx="17" cy="6" r="2"/></svg>

<!-- play controls -->
<div class="abs" style="left:1116px;top:694px;font-size:15px;font-weight:bold;color:#0d1216">0:00</div>
<div class="abs" style="left:1155px;top:683px;width:40px;height:40px;border-radius:50%;background:#fff;box-shadow:0 2px 6px rgba(0,0,0,.12)"></div>
<svg class="abs" style="left:1166px;top:692px" width="20" height="22" viewBox="0 0 20 22"><path d="M3.5 4.5 Q3.5 2.6 5.2 3.6 L16.3 10 Q17.5 11 16.3 12 L5.2 18.4 Q3.5 19.4 3.5 17.5 Z" fill="#0d1216"/></svg>
<div class="abs" style="left:1202px;top:694px;font-size:15px;color:#6a6f77">0:05</div>
<div class="abs" style="left:431px;top:733px;width:1460px;height:1px;background:#d4d7de"></div>
<!-- ruler -->
<div class="rl" style="left:440px">0s</div>
<div class="rl" style="left:676px">10s</div>
<div class="rl" style="left:916px">20s</div>
<div class="rl" style="left:1156px">30s</div>
<div class="rl" style="left:1396px">40s</div>
<div class="rl" style="left:1636px">50s</div>
<div class="abs" style="left:494px;top:751px;width:2px;height:2px;border-radius:1px;background:#b9bdc5"></div><div class="abs" style="left:542px;top:751px;width:2px;height:2px;border-radius:1px;background:#b9bdc5"></div><div class="abs" style="left:590px;top:751px;width:2px;height:2px;border-radius:1px;background:#b9bdc5"></div><div class="abs" style="left:638px;top:751px;width:2px;height:2px;border-radius:1px;background:#b9bdc5"></div><div class="abs" style="left:734px;top:751px;width:2px;height:2px;border-radius:1px;background:#b9bdc5"></div><div class="abs" style="left:782px;top:751px;width:2px;height:2px;border-radius:1px;background:#b9bdc5"></div><div class="abs" style="left:830px;top:751px;width:2px;height:2px;border-radius:1px;background:#b9bdc5"></div><div class="abs" style="left:878px;top:751px;width:2px;height:2px;border-radius:1px;background:#b9bdc5"></div><div class="abs" style="left:974px;top:751px;width:2px;height:2px;border-radius:1px;background:#b9bdc5"></div><div class="abs" style="left:1022px;top:751px;width:2px;height:2px;border-radius:1px;background:#b9bdc5"></div><div class="abs" style="left:1070px;top:751px;width:2px;height:2px;border-radius:1px;background:#b9bdc5"></div><div class="abs" style="left:1118px;top:751px;width:2px;height:2px;border-radius:1px;background:#b9bdc5"></div><div class="abs" style="left:1214px;top:751px;width:2px;height:2px;border-radius:1px;background:#b9bdc5"></div><div class="abs" style="left:1262px;top:751px;width:2px;height:2px;border-radius:1px;background:#b9bdc5"></div><div class="abs" style="left:1310px;top:751px;width:2px;height:2px;border-radius:1px;background:#b9bdc5"></div><div class="abs" style="left:1358px;top:751px;width:2px;height:2px;border-radius:1px;background:#b9bdc5"></div><div class="abs" style="left:1454px;top:751px;width:2px;height:2px;border-radius:1px;background:#b9bdc5"></div><div class="abs" style="left:1502px;top:751px;width:2px;height:2px;border-radius:1px;background:#b9bdc5"></div><div class="abs" style="left:1550px;top:751px;width:2px;height:2px;border-radius:1px;background:#b9bdc5"></div><div class="abs" style="left:1598px;top:751px;width:2px;height:2px;border-radius:1px;background:#b9bdc5"></div><div class="abs" style="left:1694px;top:751px;width:2px;height:2px;border-radius:1px;background:#b9bdc5"></div><div class="abs" style="left:1742px;top:751px;width:2px;height:2px;border-radius:1px;background:#b9bdc5"></div><div class="abs" style="left:1790px;top:751px;width:2px;height:2px;border-radius:1px;background:#b9bdc5"></div><div class="abs" style="left:1838px;top:751px;width:2px;height:2px;border-radius:1px;background:#b9bdc5"></div>
<svg class="abs" style="left:440px;top:737px" width="14" height="12" viewBox="0 0 14 12"><path d="M1 3.5 Q1 1 3.5 1 H10.5 Q13 1 13 3.5 Q13 5 11.5 6.5 L7 10.5 L2.5 6.5 Q1 5 1 3.5 Z" fill="#0d1216"/></svg>
<div class="abs" style="left:446px;top:758px;width:2px;height:148px;background:#0d1216"></div>
<!-- clips -->
<div class="abs" style="left:448px;top:763px;width:121px;height:28px;border-radius:6px;background:#8b3dff;box-shadow:inset 0 0 0 2px #8b3dff,inset 0 0 0 3px #fff"></div>
<div class="abs" style="left:455px;top:769px;font-size:14px;font-weight:bold;color:#fff;letter-spacing:-.2px">MUSIC CHAN...</div>
<div class="abs" style="left:448px;top:799px;width:121px;height:64px;border-radius:8px;border:2px solid #8b3dff;background:#fff;overflow:hidden">
 <div class="abs" style="left:2px;top:2px;width:113px;height:56px;border-radius:5px;overflow:hidden;background:#7a7a7a">
 <svg class="abs" style="left:0;top:0" width="113" height="56" viewBox="0 0 113 56"><use href="#cvs" transform="translate(-4.7,-4.8) scale(0.119)"/><rect x="110" y="0" width="3" height="56" fill="#7a7a7a"/><rect x="111.5" y="17" width="2" height="22" fill="#fde9c1"/></svg>
 <div class="abs" style="left:0;top:22px;width:113px;height:34px;background:linear-gradient(10deg,rgba(255,255,255,.95) 0%,rgba(255,255,255,.8) 25%,rgba(255,255,255,0) 50%)"></div>
 <svg class="abs" style="left:8px;top:41px" width="16" height="13" viewBox="0 0 16 13" fill="none" stroke="#0d1216" stroke-width="1.4"><rect x="1" y="1" width="13.5" height="11" rx="1"/><path d="M5.8 4 L10 6.5 L5.8 9 Z" fill="#0d1216" stroke="none"/></svg>
 <div class="abs" style="left:28px;top:39px;font-size:13px;color:#0d1216;-webkit-text-stroke:.2px #0d1216">5.0s</div>
 </div>
</div>
<div class="abs" style="left:581px;top:799px;width:96px;height:64px;border-radius:8px;background:#e2e4ea"></div>
<svg class="abs" style="left:600px;top:822px" width="18" height="18" viewBox="0 0 18 18" stroke="#0d1216" stroke-width="1.8"><path d="M9 1 V17 M1 9 H17"/></svg>
<svg class="abs" style="left:649px;top:825px" width="14" height="10" viewBox="0 0 14 10" fill="none" stroke="#0d1216" stroke-width="1.7" stroke-linecap="round" stroke-linejoin="round"><path d="M2 2.5 L7 7.5 L12 2.5"/></svg>
<div class="abs" style="left:449px;top:871px;width:94px;height:28px;border-radius:7px;background:#e6e8ed"></div>
<svg class="abs" style="left:455px;top:877px" width="16" height="16" viewBox="0 0 16 16" fill="none" stroke="#0d1216" stroke-width="1.4" stroke-linejoin="round"><path d="M5.5 13 V3.5 L13.5 2 V11"/><circle cx="3.8" cy="13" r="1.8"/><circle cx="11.8" cy="11" r="1.8"/><path d="M5.5 6 L13.5 4.5"/></svg>
<div class="abs" style="left:475px;top:877px;font-size:13.5px;color:#0d1216;-webkit-text-stroke:.3px #0d1216">Add Audio</div>
<!-- bottom bar -->
<svg class="abs" style="left:445px;top:917px" width="22" height="20" viewBox="0 0 22 20" fill="none" stroke="#0d1216" stroke-width="1.6" stroke-linecap="round" stroke-linejoin="round"><path d="M2 3 H14 M2 8 H10 M2 13 H6 M2 18 H5"/><path d="M8 18 L9 14.5 L17 6.5 A1.6 1.6 0 0 1 19.3 8.8 L11.3 16.8 Z"/></svg>
<div class="abs" style="left:471px;top:918px;font-size:15px;color:#0d1216;-webkit-text-stroke:.3px #0d1216">Notes</div>
<div class="abs" style="left:527px;top:911px;width:101px;height:32px;border-radius:7px;background:#d9dce3"></div>
<svg class="abs" style="left:532px;top:918px" width="22" height="18" viewBox="0 0 22 18" fill="none" stroke="#0d1216" stroke-width="1.6"><rect x="1.5" y="2" width="19" height="14" rx="2"/><path d="M9 6 L14 9 L9 12 Z" fill="#0d1216" stroke="none"/></svg>
<div class="abs" style="left:560px;top:918px;font-size:15px;letter-spacing:.45px;color:#0d1216;-webkit-text-stroke:.3px #0d1216">Duration</div>

<svg class="abs" style="left:1283px;top:917px" width="22" height="20" viewBox="0 0 22 20" fill="none" stroke="#0d1216" stroke-width="1.5"><rect x="2" y="1.5" width="18" height="10" rx="1.5"/><g stroke="#9a9ea6"><rect x="2" y="14.5" width="5" height="4"/><rect x="8.5" y="14.5" width="5" height="4"/><rect x="15" y="14.5" width="5" height="4"/></g></svg>
<div class="abs" style="left:1322px;top:925px;width:200px;height:4px;border-radius:2px;background:#d3d6dd"></div>
<div class="abs" style="left:1322px;top:925px;width:86px;height:4px;border-radius:2px;background:#a6abb3"></div>
<div class="abs" style="left:1396px;top:916px;width:22px;height:22px;border-radius:50%;background:#fff;box-shadow:0 1px 3px rgba(0,0,0,.3)"></div>
<div class="abs" style="left:1547px;top:918px;font-size:15px;color:#0d1216;-webkit-text-stroke:.3px #0d1216">50%</div>
<div class="abs" style="left:1603px;top:918px;width:1px;height:18px;background:#d3d6dd"></div>
<div class="abs" style="left:1613px;top:911px;width:80px;height:32px;border-radius:7px;background:#d9dce3"></div>
<svg class="abs" style="left:1619px;top:917px" width="22" height="20" viewBox="0 0 22 20" fill="none" stroke="#0d1216" stroke-width="1.6"><rect x="2" y="1.5" width="18" height="10" rx="1.5"/><path d="M2 14.5 H20 V18.5 H2 Z M8 14.5 V18.5 M14 14.5 V18.5"/></svg>
<div class="abs" style="left:1645px;top:918px;font-size:14.5px;letter-spacing:-.1px;color:#0d1216;-webkit-text-stroke:.3px #0d1216">Pages</div>
<div class="abs" style="left:1708px;top:918px;font-size:15px;letter-spacing:.2px;color:#0d1216;-webkit-text-stroke:.3px #0d1216">0:00 / 0:05</div>
<svg class="abs" style="left:1803px;top:917px" width="20" height="20" viewBox="0 0 20 20" fill="none" stroke="#0d1216" stroke-width="1.6"><rect x="2" y="2" width="6.5" height="6.5" rx="1.5"/><rect x="11.5" y="2" width="6.5" height="6.5" rx="1.5"/><rect x="2" y="11.5" width="6.5" height="6.5" rx="1.5"/><rect x="11.5" y="11.5" width="6.5" height="6.5" rx="1.5"/></svg>
<svg class="abs" style="left:1843px;top:916px" width="22" height="22" viewBox="0 0 22 22" fill="none" stroke="#0d1216" stroke-width="1.7" stroke-linecap="round" stroke-linejoin="round"><path d="M13 3 H19 V9 M19 3 L12.5 9.5 M9 19 H3 V13 M3 19 L9.5 12.5"/></svg>
<svg class="abs" style="left:1881px;top:915px" width="24" height="24" viewBox="0 0 24 24" fill="none" stroke="#0d1216" stroke-width="1.6" stroke-linecap="round"><circle cx="12" cy="12" r="9.5"/><path d="M9.2 9.3 A2.8 2.8 0 1 1 12 12.3 V14"/><circle cx="12" cy="17" r=".9" fill="#0d1216"/></svg>
<!--OVER_END-->

</body></html>
